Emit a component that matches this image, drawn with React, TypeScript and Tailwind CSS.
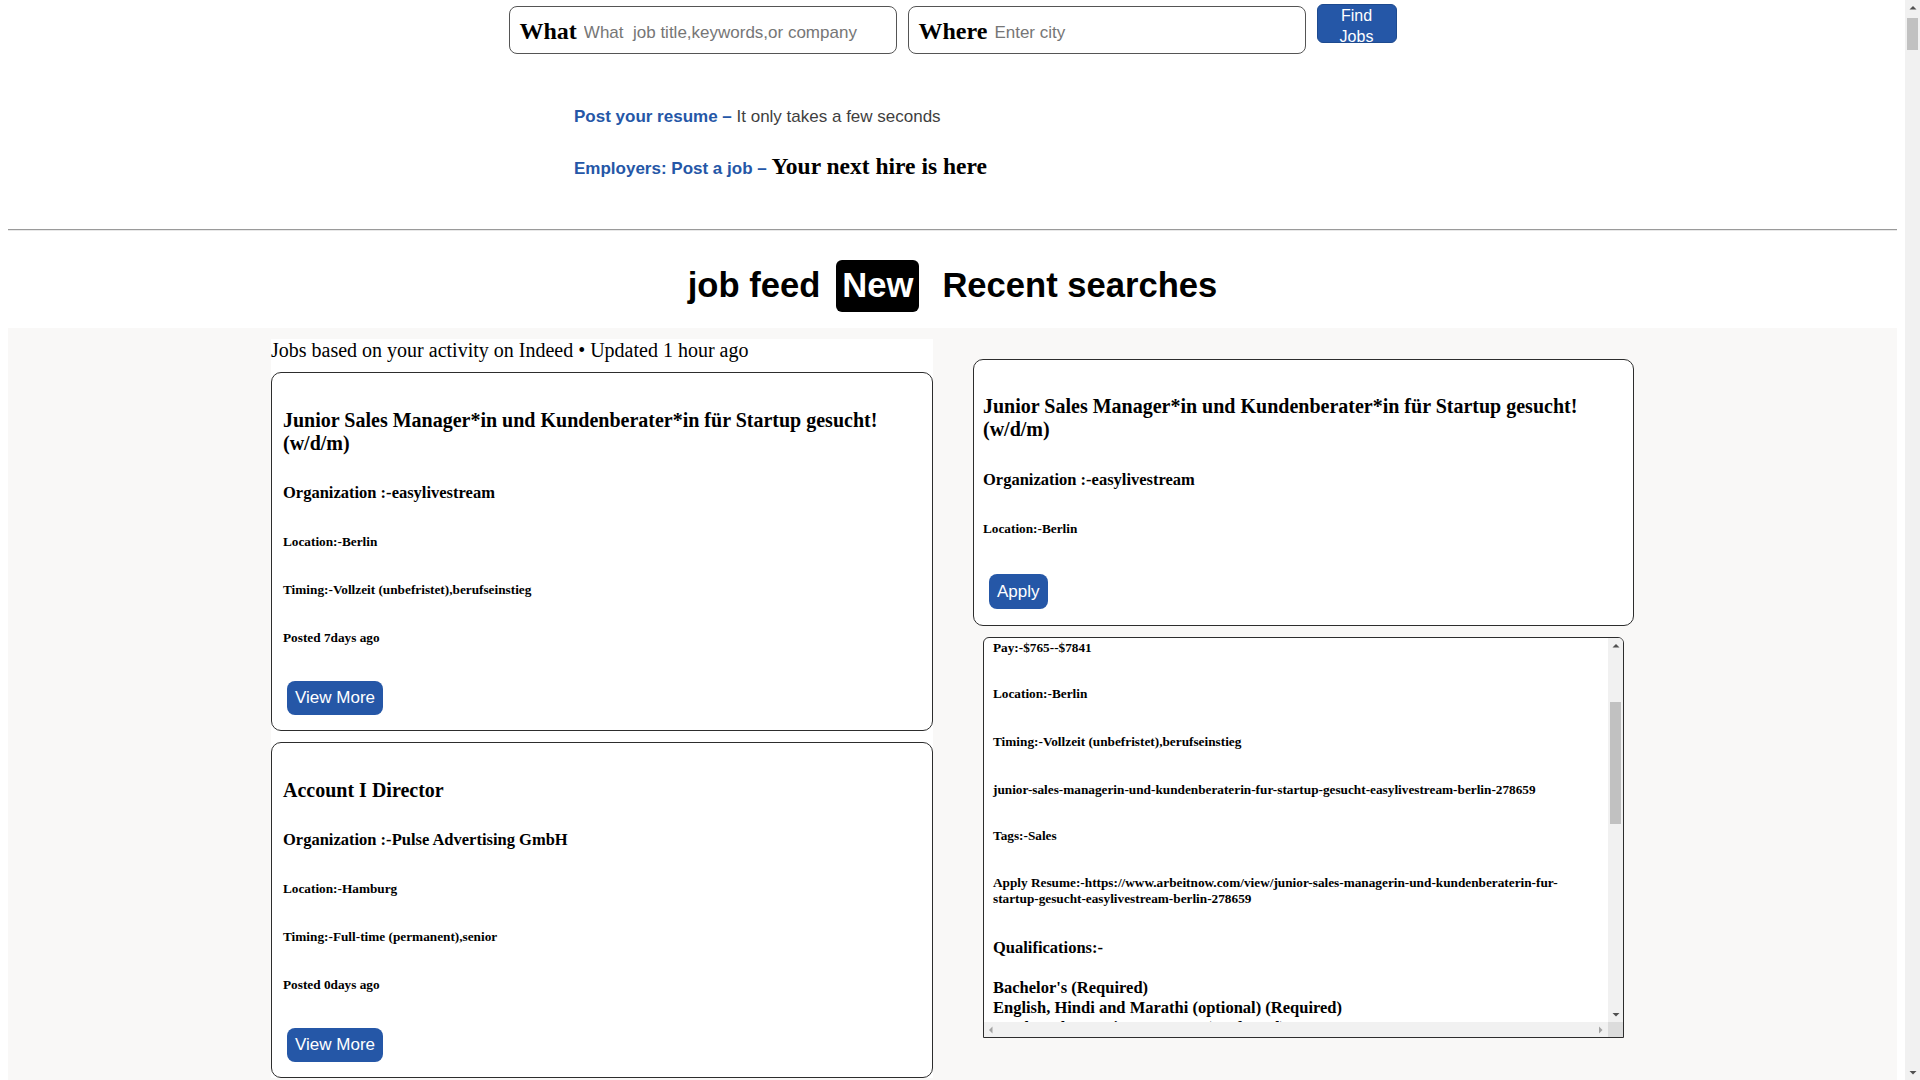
type Job = {
  title: string;
  org: string;
  location: string;
  timing: string;
  posted: number;
};

const jobs: Job[] = [
  {
    title: "Junior Sales Manager*in und Kundenberater*in für Startup gesucht! (w/d/m)",
    org: "easylivestream",
    location: "Berlin",
    timing: "Vollzeit (unbefristet),berufseinstieg",
    posted: 7,
  },
  {
    title: "Account I Director",
    org: "Pulse Advertising GmbH",
    location: "Hamburg",
    timing: "Full-time (permanent),senior",
    posted: 0,
  },
];

const serif = "font-['Liberation_Serif','Times_New_Roman',serif]";
const sans = "font-['Liberation_Sans',Arial,sans-serif]";

// small triangle used by the scrollbar buttons
const Arrow = ({ dir, color }: { dir: "up" | "down" | "left" | "right"; color: string }) => {
  const points = {
    up: "0.5,4.5 4,1 7.5,4.5",
    down: "0.5,1 4,4.5 7.5,1",
    left: "4.5,0.5 1,4 4.5,7.5",
    right: "1,0.5 4.5,4 1,7.5",
  }[dir];
  const vertical = dir === "up" || dir === "down";
  return (
    <svg width={vertical ? 8 : 6} height={vertical ? 6 : 8} viewBox={vertical ? "0 0 8 6" : "0 0 6 8"}>
      <polygon points={points} fill={color} />
    </svg>
  );
};

const VScrollbar = ({ thumbTop, thumbHeight }: { thumbTop: string; thumbHeight: string }) => (
  <div className="flex w-[15px] shrink-0 flex-col bg-[#f1f1f1]">
    <div className="flex h-[15px] items-center justify-center">
      <Arrow dir="up" color="#505050" />
    </div>
    <div className="flex-1 px-[2px]">
      <div className={`bg-[#c1c1c1] ${thumbTop} ${thumbHeight}`} />
    </div>
    <div className="flex h-[15px] items-center justify-center">
      <Arrow dir="down" color="#505050" />
    </div>
  </div>
);

const JobCard = ({ job }: { job: Job }) => (
  <div className={`rounded-[10px] border border-[#2d2d2d] bg-white px-[11px] pt-[36px] pb-[15px] text-black ${serif}`}>
    <h3 className="text-[20px] font-bold leading-[23px]">{job.title}</h3>
    <h4 className="mt-[28px] text-[16.5px] font-bold leading-[19px]">Organization :-{job.org}</h4>
    <h5 className="mt-[32px] text-[13.28px] font-bold leading-[15px]">Location:-{job.location}</h5>
    <h5 className="mt-[33px] text-[13.28px] font-bold leading-[15px]">Timing:-{job.timing}</h5>
    <h5 className="mt-[33px] text-[13.28px] font-bold leading-[15px]">Posted {job.posted}days ago</h5>
    <button
      className={`mt-[36px] ml-[4px] block h-[34px] rounded-[8px] bg-[#2557a7] px-[8px] text-[17px] text-white ${sans}`}
    >
      View More
    </button>
  </div>
);

// job details, shown scrolled down to the pay line
const DetailBox = () => (
  <div className="mx-[10px] mt-[11px] flex h-[401px] flex-col overflow-hidden rounded-t-[6px] border border-[#2d2d2d] bg-white">
    <div className="flex min-h-0 flex-1">
      <div className={`min-w-0 flex-1 overflow-hidden px-[9px] pt-[2px] text-black ${serif}`}>
        <h5 className="text-[13.28px] font-bold leading-[15px]">Pay:-$765--$7841</h5>
        <h5 className="mt-[31px] text-[13.28px] font-bold leading-[15px]">Location:-Berlin</h5>
        <h5 className="mt-[33px] text-[13.28px] font-bold leading-[15px]">
          Timing:-Vollzeit (unbefristet),berufseinstieg
        </h5>
        <h5 className="mt-[33px] text-[13.28px] font-bold leading-[15px]">
          junior-sales-managerin-und-kundenberaterin-fur-startup-gesucht-easylivestream-berlin-278659
        </h5>
        <h5 className="mt-[31px] text-[13.28px] font-bold leading-[15px]">Tags:-Sales</h5>
        <h5 className="mt-[32px] text-[13.28px] font-bold leading-[16px]">
          Apply Resume:-https://www.arbeitnow.com/view/junior-sales-managerin-und-kundenberaterin-fur-startup-gesucht-easylivestream-berlin-278659
        </h5>
        <h4 className="mt-[31px] text-[16.5px] font-bold leading-[19px]">Qualifications:-</h4>
        <div className="mt-[21px] text-[16.5px] font-bold leading-[20px]">
          <p>Bachelor's (Required)</p>
          <p>English, Hindi and Marathi (optional) (Required)</p>
          <p>Total work experience: 1 year (Preferred)</p>
        </div>
      </div>
      <VScrollbar thumbTop="mt-[49px]" thumbHeight="h-[122px]" />
    </div>
    <div className="flex h-[15px] shrink-0">
      <div className="flex flex-1 items-center justify-between bg-[#f1f1f1] px-[4px]">
        <Arrow dir="left" color="#a3a3a3" />
        <Arrow dir="right" color="#a3a3a3" />
      </div>
      <div className="w-[15px] bg-[#dcdcdc]" />
    </div>
  </div>
);

const SearchBox = ({ label, placeholder, width }: { label: string; placeholder: string; width: string }) => (
  <div className={`mt-[2px] flex h-[48px] items-center rounded-[8px] border border-[#555] bg-white px-[10px] ${width}`}>
    <span className={`mt-[2px] text-[24px] font-bold text-black ${serif}`}>{label}</span>
    <input
      placeholder={placeholder}
      className={`mt-[6px] ml-[7px] min-w-0 flex-1 bg-transparent text-[17px] text-[#222] outline-none placeholder:text-[#767676] ${sans}`}
    />
  </div>
);

export default function App() {
  return (
    <div className="flex h-screen overflow-hidden bg-white">
      <div className="min-w-0 flex-1 overflow-hidden px-2">
        {/* SEARCH */}
        <div className="flex items-start justify-center gap-[11px] pt-[4px]">
          <SearchBox label="What" placeholder="What  job title,keywords,or company" width="w-[388px]" />
          <SearchBox label="Where" placeholder="Enter city" width="w-[398px]" />
          <button
            className={`h-[39px] w-[80px] rounded-[6px] border border-[#1d4a8f] bg-[#2557a7] px-[8px] text-[16px] leading-[21px] text-white ${sans}`}
          >
            Find Jobs
          </button>
        </div>

        {/* POST LINKS */}
        <div className="mt-[53px] pl-[566px]">
          <p className={`text-[17px] leading-[20px] ${sans}`}>
            <span className="font-bold text-[#2557a7]">Post your resume –</span>{" "}
            <span className="text-[#3f3f3f]">It only takes a few seconds</span>
          </p>
          <p className={`mt-[26px] text-[17px] leading-[26px] ${sans}`}>
            <span className="font-bold text-[#2557a7]">Employers: Post a job –</span>{" "}
            <span className={`text-[23.5px] font-bold text-black ${serif}`}>Your next hire is here</span>
          </p>
        </div>

        <hr className="mt-[47px] border-t border-b border-t-[#9a9a9a] border-b-[#e8e8e8]" />

        {/* TABS */}
        <div className={`flex items-center justify-center pt-[29px] pb-[16px] text-[34.6px] font-bold text-black ${sans}`}>
          <span>job feed</span>
          <span className="ml-[16px] flex h-[52px] items-center rounded-[6px] bg-black px-[6px] text-white">New</span>
          <span className="ml-[23px]">Recent searches</span>
        </div>

        {/* FEED */}
        <div className="flex items-start justify-center gap-[40px] bg-[#f9f8f7] pt-[11px] pb-[40px]">
          <div className="w-[662px] bg-white">
            <p className={`text-[20px] leading-[23px] text-black ${serif}`}>
              Jobs based on your activity on Indeed • Updated 1 hour ago
            </p>
            <div className="mt-[10px] flex flex-col gap-[11px]">
              {jobs.map((job, i) => (
                <JobCard key={i} job={job} />
              ))}
            </div>
          </div>

          <div className="mt-[20px] w-[661px]">
            <div className={`rounded-[10px] border border-[#2d2d2d] bg-white px-[9px] pt-[35px] pb-[16px] text-black ${serif}`}>
              <h3 className="text-[20px] font-bold leading-[23px]">
                Junior Sales Manager*in und Kundenberater*in für Startup gesucht! (w/d/m)
              </h3>
              <h4 className="mt-[29px] text-[16.5px] font-bold leading-[19px]">Organization :-easylivestream</h4>
              <h5 className="mt-[32px] text-[13.28px] font-bold leading-[15px]">Location:-Berlin</h5>
              <button
                className={`mt-[38px] ml-[6px] block h-[35px] rounded-[8px] bg-[#2557a7] px-[8px] text-[17px] text-white ${sans}`}
              >
                Apply
              </button>
            </div>
            <DetailBox />
          </div>
        </div>
      </div>

      {/* page scrollbar */}
      <VScrollbar thumbTop="mt-[3px]" thumbHeight="h-[32px]" />
    </div>
  );
}
